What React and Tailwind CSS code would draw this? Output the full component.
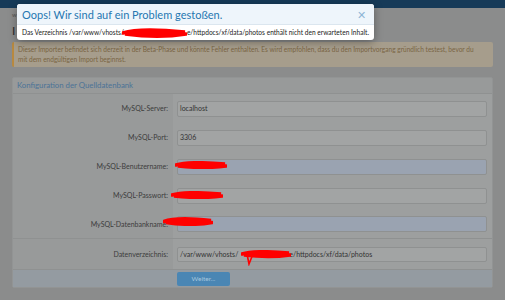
import React from 'react';

const font = { fontFamily: 'Lato, "Noto Sans", sans-serif' };

function Scribble({ w = 52, h = 8, tail = false }) {
  return (
    <svg width={w} height={tail ? h + 8 : h} viewBox={`0 0 ${w} ${tail ? h + 8 : h}`} className="block">
      <path
        d={`M1 ${h / 2} C ${w * 0.2} 1, ${w * 0.5} 1, ${w - 2} ${h / 2 - 1} L 3 ${h / 2 + 1} C ${w * 0.4} ${h - 1}, ${w * 0.7} ${h - 1}, ${w - 1} ${h / 2 + 1}`}
        stroke="#ff0000"
        strokeWidth="3.5"
        fill="none"
        strokeLinecap="round"
      />
      {tail && <path d={`M6 ${h / 2} L 8 ${h + 6} L 12 ${h / 2}`} stroke="#ff0000" strokeWidth="1.6" fill="none" />}
    </svg>
  );
}

function Row({ label, children, blue, border = false, scribble }) {
  return (
    <div className={`flex h-[29px] ${border ? 'border-b border-[#8f9191]' : ''}`}>
      <div className="w-[160px] shrink-0 flex items-center justify-end pr-[5px] text-[7px] text-[#3c3c3c] relative">
        {label}
        {scribble}
      </div>
      <div className="flex-1 bg-[#9d9f9f] flex items-center pl-[4px] pr-[5px]">
        <div
          className={`h-[16px] w-full rounded-[2px] border border-[#8f9191] flex items-center px-[2px] text-[7px] text-[#333] ${
            blue ? 'bg-[#9aa3b1]' : 'bg-[#a2a4a4]'
          }`}
        >
          {children}
        </div>
      </div>
    </div>
  );
}

export default function App() {
  return (
    <div className="w-[505px] h-[300px] bg-[#8b8c8c] relative overflow-hidden" style={font}>
      <div className="h-[8px] bg-[#163a58]" />
      <div className="px-[12px]">
        <div className="h-[14px] pt-[4px] text-[6px] text-[#555] leading-none">w</div>
        <div className="h-[20px] text-[12px] text-[#2b2b2b] leading-[18px]">I</div>
        <div className="h-[25px] bg-[#a69d8c] border-l-2 border-[#b8893f] rounded-[2px] px-[4px] pt-[3px] text-[6.55px] leading-[10px] text-[#7a6544] whitespace-nowrap">
          Dieser Importer befindet sich derzeit in der Beta-Phase und könnte Fehler enthalten. Es wird empfohlen, dass du den Importvorgang gründlich testest, bevor du
          <br />
          mit dem endgültigen Import beginnst.
        </div>
        <div className="mt-[10px] bg-[#989a9a] border border-[#929494] rounded-[2px]">
          <div className="h-[16px] flex items-center px-[4px] text-[7.8px] text-[#4c7397] border-b border-[#8f9191]">
            Konfiguration der Quelldatenbank
          </div>
          <Row label="MySQL-Server:">localhost</Row>
          <Row label="MySQL-Port:">3306</Row>
          <Row
            label="MySQL-Benutzername:"
            blue
            scribble={<div className="absolute left-[162px] top-[9px]"><Scribble w={52} h={8} /></div>}
          />
          <Row
            label="MySQL-Passwort:"
            scribble={<div className="absolute left-[158px] top-[10px]"><Scribble w={52} h={8} /></div>}
          />
          <Row
            label="MySQL-Datenbankname:"
            blue
            border
            scribble={<div className="absolute left-[150px] top-[7px]"><Scribble w={50} h={9} /></div>}
          />
          <div className="flex h-[30px]">
            <div className="w-[160px] shrink-0 flex items-center justify-end pr-[5px] text-[7px] text-[#3c3c3c]">
              Datenverzeichnis:
            </div>
            <div className="flex-1 bg-[#9d9f9f] flex items-center pl-[4px] pr-[5px]">
              <div className="h-[15px] w-full rounded-[2px] border border-[#8f9191] bg-[#a2a4a4] flex items-center px-[2px] text-[7px] text-[#333] relative">
                /var/www/vhosts/
                <span className="inline-block w-[51px]" />
                e/httpdocs/xf/data/photos
                <div className="absolute left-[63px] top-[2px]"><Scribble w={50} h={8} tail /></div>
              </div>
            </div>
          </div>
          <div className="h-[18px] bg-[#949ba1] border-t border-[#8f9191] flex items-center pl-[164px]">
            <div className="w-[53px] h-[14px] rounded-[2px] bg-[#4a86b4] text-[#a8c6de] text-[6.5px] flex items-center justify-center">
              Weiter...
            </div>
          </div>
        </div>
      </div>

      <div className="absolute left-[17px] top-[4px] w-[357px] rounded-[3px] bg-white shadow-[0_2px_8px_rgba(0,0,0,0.35)] overflow-hidden">
        <div className="h-[21px] bg-[#eef5fb] border-b border-[#dbe6ef] flex items-center justify-between pl-[5px] pr-[8px]">
          <span className="text-[11px] text-[#2577b1] leading-none">Oops! Wir sind auf ein Problem gestoßen.</span>
          <span className="text-[11px] text-[#8fb6d6] leading-none">✕</span>
        </div>
        <div className="h-[15px] flex items-center pl-[5px] text-[6.6px] text-[#222] whitespace-nowrap">
          Das Verzeichnis /var/www/vhosts/
          <span className="inline-block w-[63px] relative">
            <span className="absolute left-[-2px] top-[-5px]"><Scribble w={65} h={10} /></span>
          </span>
          e/httpdocs/xf/data/photos enthält nicht den erwarteten Inhalt.
        </div>
      </div>
    </div>
  );
}
